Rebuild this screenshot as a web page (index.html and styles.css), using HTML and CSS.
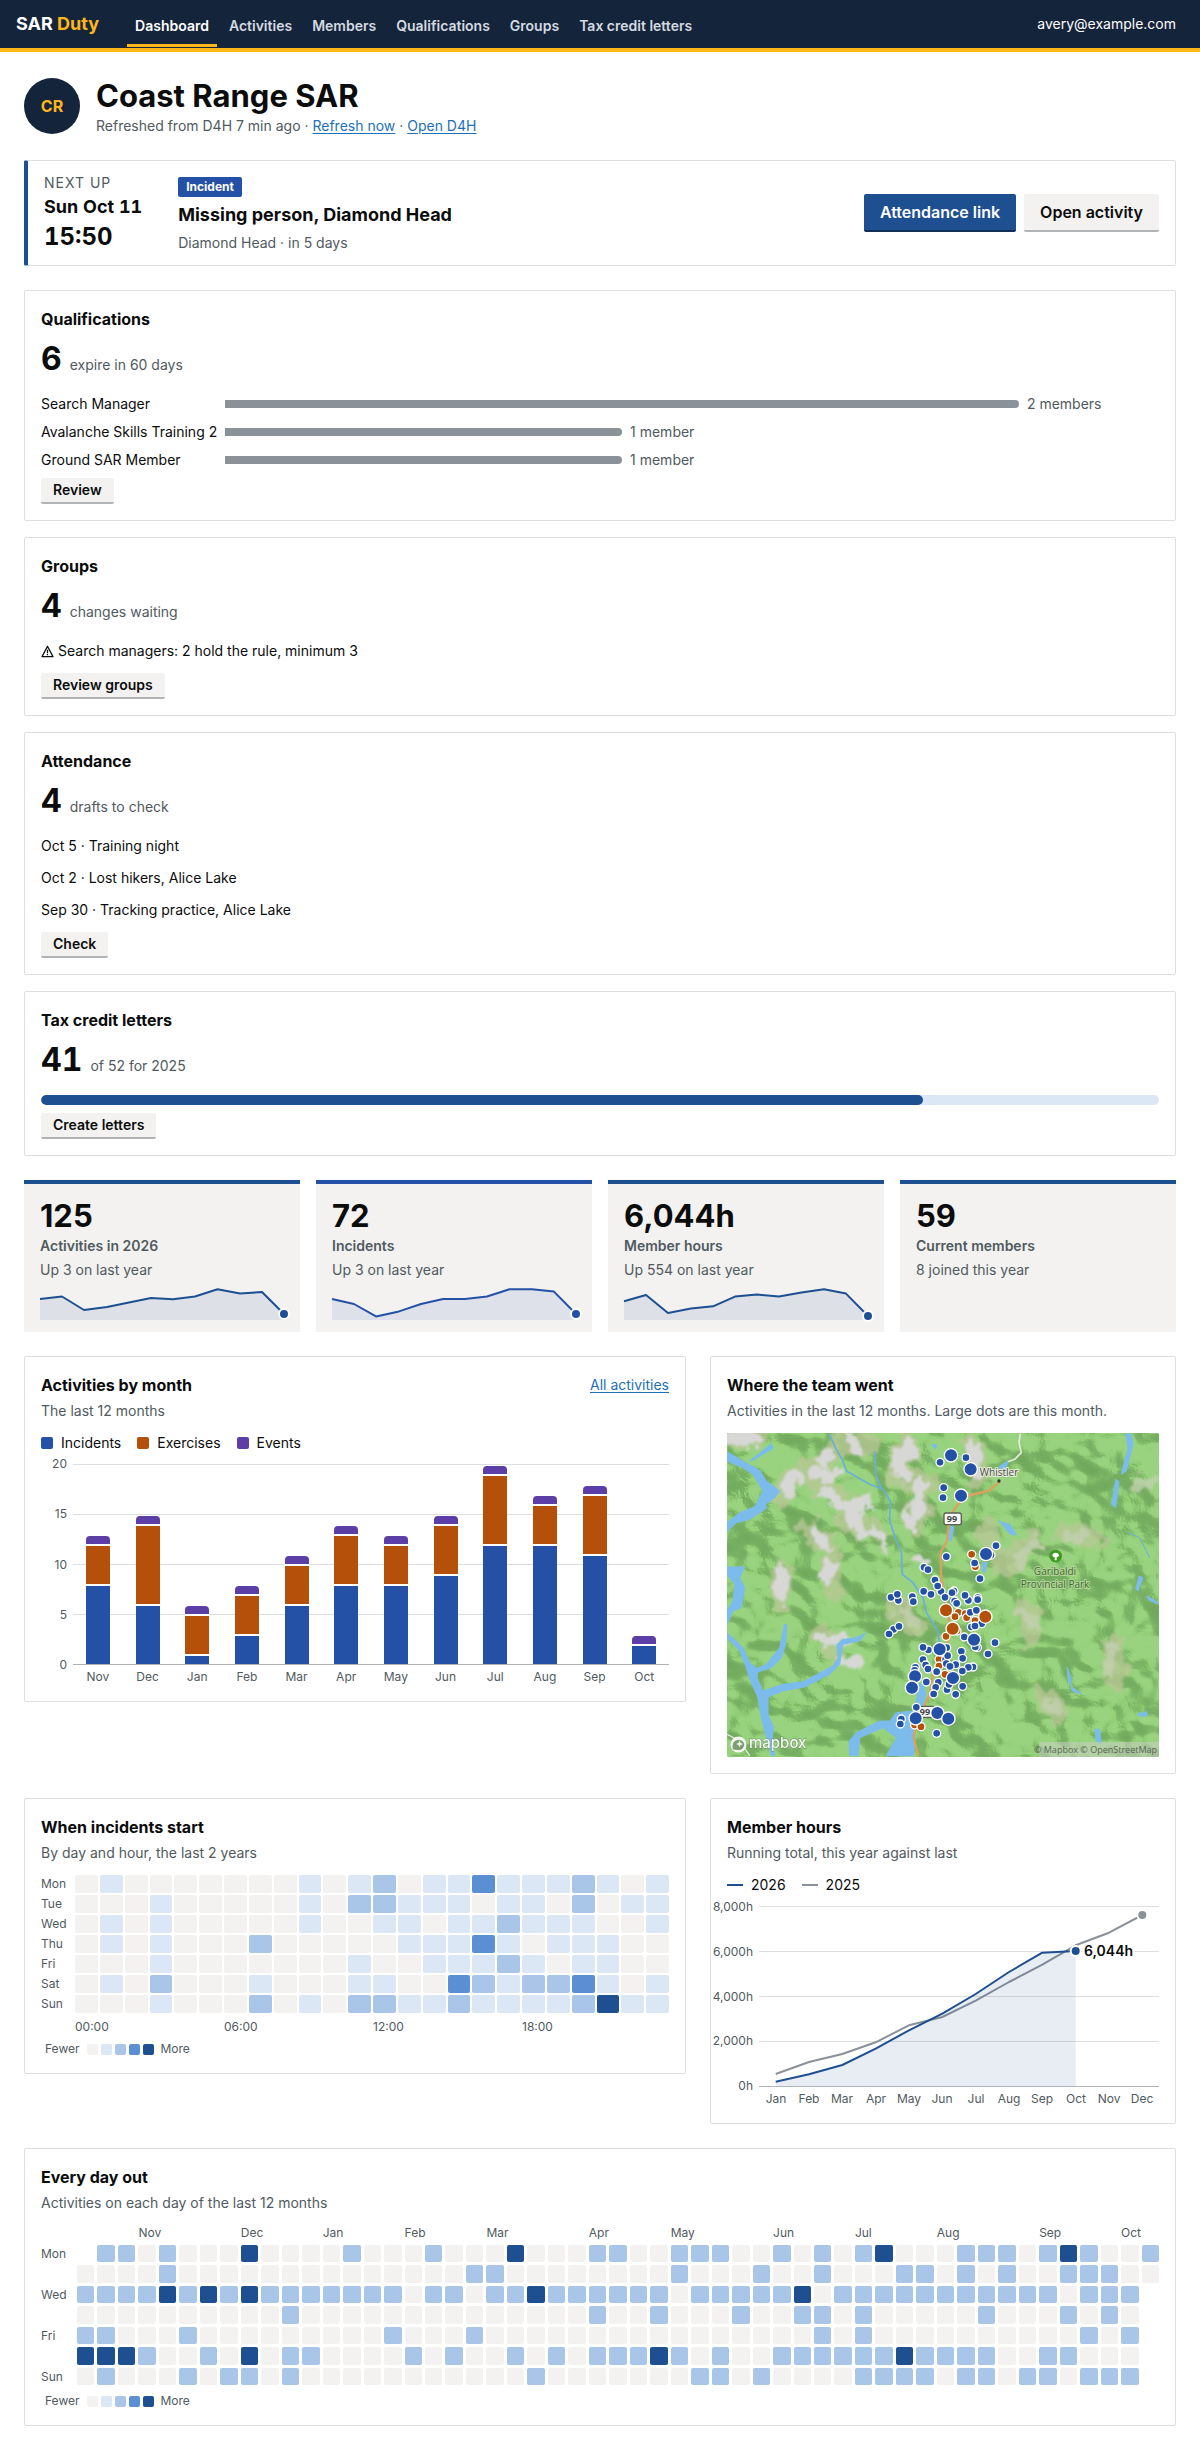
FILE: index.html
```html
<!DOCTYPE html>
<html lang="en">
<head>
<meta charset="utf-8">
<meta name="viewport" content="width=device-width, initial-scale=1">
<title>Dashboard · SAR Duty</title>
<link rel="stylesheet" href="styles.css">
</head>
<body>
<header class="topbar">
  <a class="brand" href="#">SAR <span class="brand-accent">Duty</span></a>
  <nav class="nav" aria-label="Main">
    <a class="nav-link is-current" href="#" aria-current="page">Dashboard</a>
    <a class="nav-link" href="#">Activities</a>
    <a class="nav-link" href="#">Members</a>
    <a class="nav-link" href="#">Qualifications</a>
    <a class="nav-link" href="#">Groups</a>
    <a class="nav-link" href="#">Tax credit letters</a>
  </nav>
  <a class="account" href="#">avery@example.com</a>
</header>

<main class="page">
  <div class="team">
    <div class="avatar" aria-hidden="true">CR</div>
    <div>
      <h1 class="team-name">Coast Range SAR</h1>
      <p class="muted">Refreshed from D4H 7 min ago · <a class="link" href="#">Refresh now</a> · <a class="link" href="#">Open D4H</a></p>
    </div>
  </div>

  <section class="next" aria-label="Next up">
    <div class="next-when">
      <p class="next-kicker">NEXT UP</p>
      <p class="next-date">Sun Oct 11</p>
      <p class="next-time">15:50</p>
    </div>
    <div class="next-what">
      <span class="badge">Incident</span>
      <h2 class="next-title">Missing person, Diamond Head</h2>
      <p class="muted">Diamond Head · in 5 days</p>
    </div>
    <div class="next-actions">
      <button class="button button-primary" type="button">Attendance link</button>
      <button class="button" type="button">Open activity</button>
    </div>
  </section>

  <div class="stack">
    <section class="card">
      <h2 class="card-title">Qualifications</h2>
      <p class="figure"><strong class="figure-number">6</strong><span class="figure-label">expire in 60 days</span></p>
      <div class="quals">
        <span>Search Manager</span>
        <div class="qual-track"><span class="qual-bar" style="width:85%"></span><span class="muted">2 members</span></div>
        <span>Avalanche Skills Training 2</span>
        <div class="qual-track"><span class="qual-bar" style="width:42.5%"></span><span class="muted">1 member</span></div>
        <span>Ground SAR Member</span>
        <div class="qual-track"><span class="qual-bar" style="width:42.5%"></span><span class="muted">1 member</span></div>
      </div>
      <button class="button button-small" type="button">Review</button>
    </section>

    <section class="card">
      <h2 class="card-title">Groups</h2>
      <p class="figure"><strong class="figure-number">4</strong><span class="figure-label">changes waiting</span></p>
      <p class="item item-warning">
        <svg class="warning-icon" viewBox="0 0 13 13" aria-hidden="true"><path d="M6.5 1.4 12 11.6H1Z" fill="none" stroke="currentColor" stroke-width="1.2" stroke-linejoin="round"/><path d="M6.5 4.8v3.4M6.5 9.1v1.2" stroke="currentColor" stroke-width="1.2"/></svg>
        Search managers: 2 hold the rule, minimum 3
      </p>
      <button class="button button-small" type="button">Review groups</button>
    </section>

    <section class="card">
      <h2 class="card-title">Attendance</h2>
      <p class="figure"><strong class="figure-number">4</strong><span class="figure-label">drafts to check</span></p>
      <p class="item">Oct 5 · Training night</p>
      <p class="item">Oct 2 · Lost hikers, Alice Lake</p>
      <p class="item">Sep 30 · Tracking practice, Alice Lake</p>
      <button class="button button-small" type="button">Check</button>
    </section>

    <section class="card">
      <h2 class="card-title">Tax credit letters</h2>
      <p class="figure"><strong class="figure-number">41</strong><span class="figure-label">of 52 for 2025</span></p>
      <div class="progress" role="progressbar" aria-valuemin="0" aria-valuemax="52" aria-valuenow="41" aria-label="Letters created"><div class="progress-fill" style="width:78.85%"></div></div>
      <button class="button button-small" type="button">Create letters</button>
    </section>
  </div>

  <div class="tiles">
    <section class="tile">
      <p class="tile-number">125</p>
      <h2 class="tile-label">Activities in 2026</h2>
      <p class="tile-note">Up 3 on last year</p>
      <svg class="spark" viewBox="0 0 244 32" aria-hidden="true">
        <path class="spark-area" d="M0 11 22 8.5 44 22 67 19 89 14.5 111 10 133 11.3 155 8.5 177.5 1.2 200 5.5 222 4 244 26V32H0Z"/>
        <path class="spark-line" d="M0 11 22 8.5 44 22 67 19 89 14.5 111 10 133 11.3 155 8.5 177.5 1.2 200 5.5 222 4 244 26"/>
        <circle class="spark-dot" cx="244" cy="26" r="5"/>
      </svg>
    </section>
    <section class="tile tile-incidents">
      <p class="tile-number">72</p>
      <h2 class="tile-label">Incidents</h2>
      <p class="tile-note">Up 3 on last year</p>
      <svg class="spark" viewBox="0 0 244 32" aria-hidden="true">
        <path class="spark-area" d="M0 11 22 16 44 28.4 67 23.4 89 16 111 11 133 11 155 8.5 177.5 1.2 200 1.2 222 3.6 244 26V32H0Z"/>
        <path class="spark-line" d="M0 11 22 16 44 28.4 67 23.4 89 16 111 11 133 11 155 8.5 177.5 1.2 200 1.2 222 3.6 244 26"/>
        <circle class="spark-dot" cx="244" cy="26" r="5"/>
      </svg>
    </section>
    <section class="tile">
      <p class="tile-number">6,044h</p>
      <h2 class="tile-label">Member hours</h2>
      <p class="tile-note">Up 554 on last year</p>
      <svg class="spark" viewBox="0 0 244 32" aria-hidden="true">
        <path class="spark-area" d="M0 13.3 22 7 44 25 67 20.5 89 18.3 111 8.6 133 6.6 155 8.4 177.5 4.4 200 1.2 222 5.6 244 28V32H0Z"/>
        <path class="spark-line" d="M0 13.3 22 7 44 25 67 20.5 89 18.3 111 8.6 133 6.6 155 8.4 177.5 4.4 200 1.2 222 5.6 244 28"/>
        <circle class="spark-dot" cx="244" cy="28" r="5"/>
      </svg>
    </section>
    <section class="tile">
      <p class="tile-number">59</p>
      <h2 class="tile-label">Current members</h2>
      <p class="tile-note">8 joined this year</p>
    </section>
  </div>

  <div class="panels">
    <section class="card panel-wide">
      <div class="card-head"><h2 class="card-title">Activities by month</h2><a class="link" href="#">All activities</a></div>
      <p class="card-note">The last 12 months</p>
      <ul class="legend">
        <li class="legend-item"><span class="key key-incidents"></span>Incidents</li>
        <li class="legend-item"><span class="key key-exercises"></span>Exercises</li>
        <li class="legend-item"><span class="key key-events"></span>Events</li>
      </ul>
      <div class="columns">
        <div class="scale"><span>20</span><span>15</span><span>10</span><span>5</span><span>0</span></div>
        <div class="plot" id="plot"></div>
        <div class="months" id="months"></div>
      </div>
    </section>

    <section class="card panel-narrow">
      <h2 class="card-title">Where the team went</h2>
      <p class="card-note">Activities in the last 12 months. Large dots are this month.</p>
      <svg class="map" viewBox="0 0 432 324" role="img" aria-label="Map of activities">
        <defs>
          <filter id="relief" x="0" y="0" width="100%" height="100%" color-interpolation-filters="sRGB">
            <feTurbulence type="fractalNoise" baseFrequency="0.018 0.021" numOctaves="3" seed="11"/>
            <feColorMatrix values="0 0 0 0 0  0 0 0 0 0  0 0 0 0 0  1 0 0 0 0"/>
            <feDiffuseLighting surfaceScale="22" diffuseConstant="1.15" lighting-color="#fff"><feDistantLight azimuth="315" elevation="52"/></feDiffuseLighting>
            <feComponentTransfer>
              <feFuncR type="table" tableValues=".44 .45 .46 .47 .5 .58 .6"/>
              <feFuncG type="table" tableValues=".66 .67 .68 .69 .73 .81 .83"/>
              <feFuncB type="table" tableValues=".36 .37 .38 .39 .41 .47 .5"/>
            </feComponentTransfer>
          </filter>
          <filter id="ragged" x="-10%" y="-10%" width="120%" height="120%">
            <feTurbulence type="fractalNoise" baseFrequency="0.07" numOctaves="3" seed="4"/>
            <feDisplacementMap in="SourceGraphic" scale="24" xChannelSelector="R" yChannelSelector="G"/>
            <feGaussianBlur stdDeviation="0.8"/>
          </filter>
        </defs>
        <rect width="432" height="324" fill="#86c06d"/>
        <rect width="432" height="324" filter="url(#relief)"/>
        <g filter="url(#ragged)">
          <g transform="scale(.33333) translate(-82 -266)">
            <g fill="none" stroke="#b9c795" stroke-linecap="round" stroke-linejoin="round" stroke-width="66" opacity=".75">
              <path d="M100 280 170 275M250 450 270 400 380 350 440 290 500 300M320 390 420 450 440 520 540 580M620 300 600 400 680 420 640 540M330 560 380 600M390 650 400 740M250 680 240 760M360 870 420 940M820 300 840 400M1000 590 920 670M1100 560 1180 580M980 800 990 880M1240 900 1250 1000M590 780 640 850M1040 1060 1060 1100M860 560 900 620"/>
            </g>
            <g fill="none" stroke="#d7d8d6" stroke-linecap="round" stroke-linejoin="round" stroke-width="40">
              <path d="M100 280 160 285M260 450 285 395M370 350 390 330M450 280 480 320M340 390 400 400M390 450 420 490 500 470M460 510 490 560 550 590M630 300 600 360 620 400M660 430 650 490 630 550M350 560 375 600M390 660 380 700M250 680 240 760M370 890 430 880M820 300 830 390M660 640 670 650M420 950 470 960"/>
            </g>
            <g fill="none" stroke="#c3d2b2" stroke-linecap="round" stroke-width="38" opacity=".75">
              <path d="M1010 600 960 650M970 810 1000 840M1110 580 1150 570M1230 980 1240 900M1050 1070 1060 1090M610 800 640 830M1320 420 1350 410"/>
            </g>
          </g>
        </g>
        <g transform="scale(.33333) translate(-82 -266)">
          <g fill="#7bbcec" stroke="#7bbcec" stroke-linejoin="round" stroke-width="3">
            <path d="M82 322 130 350 180 378 200 410 240 440 225 460 198 480 200 492 150 525 110 535 82 562V535L120 505 165 488 190 440 160 390 130 370 82 350Z"/>
            <path d="M82 668 135 668 120 700 135 730 125 790 100 800 82 840V800L100 770 105 720 82 690Z"/>
            <path d="M82 866 110 890 130 910 150 955 175 975 172 1000 190 1040 250 1020 310 1012 400 965 415 940 412 900 430 885 470 880 498 866 480 890 430 900 420 960 390 990 315 1028 250 1040 205 1058 205 1110 222 1150 218 1175 225 1234 215 1234 200 1180 185 1120 175 1060 150 1005 140 970 120 920 82 880Z"/>
            <path d="M165 975 200 960 240 910 255 840 262 842 258 900 245 940 215 970 170 985Z"/>
            <path d="M450 1234 448 1190 470 1165 540 1130 570 1130 590 1105 640 1100 652 1060 655 1020 672 1020 678 1050 668 1090 650 1110 642 1234 560 1234 590 1180 550 1150 480 1180 475 1234Z"/>
            <path d="M1278 268 1295 270 1300 300 1280 380 1265 390 1285 310ZM1248 405 1258 412 1248 490 1236 480ZM898 530 930 540 952 572 932 570ZM1318 695 1330 700 1315 740 1308 735ZM1343 755 1376 775 1370 778 1345 765ZM1102 968 1115 1005 1112 1025 1145 1048 1120 1042 1106 1010ZM1185 1155 1200 1155 1205 1200 1190 1190ZM1315 1108 1342 1102 1340 1116 1316 1114Z"/>
            <path d="M752 545 763 548 755 590 745 585ZM848 655 862 655 856 685 848 680ZM900 365 925 350 920 370 898 376ZM695 300 711 302 708 315ZM150 350 215 298 220 312 190 330 160 348Z"/>
          </g>
          <g fill="none" stroke="#6aaee0" stroke-width="5">
            <path d="M388 268 410 315 430 350 440 380 510 420 550 435 572 470 570 530 590 590 605 620 608 690 640 715 670 760 680 805 715 860 720 900"/>
            <path d="M525 320 528 390 545 432"/><path d="M1285 565 1320 580 1350 640" stroke-width="3"/>
          </g>
          <g fill="none" stroke="#d9a25f" stroke-width="7" stroke-linejoin="round">
            <path d="M898 415 865 440 800 455 775 480 750 515 742 590 722 625 724 690 732 740 745 800 750 880 720 940 700 990 690 1050 672 1090 650 1130 642 1180 655 1234"/>
            <path d="M962 268 958 295 965 325 945 345 925 352" stroke="#e4ecdf" stroke-width="5"/>
          </g>
          <path d="M82 1170 120 1190 150 1234" fill="none" stroke="#e4ecdf" stroke-width="4"/>
          <g fill="#f8f8f4" stroke="#5c6058" stroke-width="4"><rect x="733" y="506" width="52" height="35" rx="6"/><rect x="655" y="1086" width="50" height="33" rx="6"/></g>
          <circle cx="898" cy="410" r="5" fill="#333"/>
          <circle cx="1068" cy="635" r="19" fill="#3f9a20"/>
          <path d="M1068 625c6 0 10 4 10 8s-4 6-7 6v9h-6v-9c-3 0-7-2-7-6s4-8 10-8z" fill="#fff"/>
        </g>
        <g class="map-text" text-anchor="middle">
          <text class="map-road" x="225" y="89">99</text>
          <text class="map-road" x="198" y="282">99</text>
          <text class="map-town" x="272" y="43">Whistler</text>
          <text class="map-park" x="328" y="142">Garibaldi</text>
          <text class="map-park" x="328" y="155">Provincial Park</text>
        </g>
        <g id="dots" class="dots" transform="scale(.33333) translate(-82 -266)"></g>
        <g class="map-logo">
          <circle cx="11.5" cy="311.5" r="8" fill="#fff"/>
          <path d="M6 316.500c-2-7 3-10.500 7-9.500 4 1 5.500 5 3 8-2.500 3-7 2-10 1.500z" fill="#7b9a75"/>
          <path d="M12.500 307.500l1 2.500 2.500 1-2.500 1-1 2.500-1-2.500-2.500-1 2.500-1z" fill="#fff"/>
          <text class="map-brand" x="22" y="315">mapbox</text>
        </g>
        <rect x="312" y="309" width="120" height="15" fill="#c9cfc4" opacity=".55"/>
        <text class="map-credit" x="430" y="320" text-anchor="end">© Mapbox © OpenStreetMap</text>
      </svg>
    </section>

    <section class="card panel-wide">
      <h2 class="card-title">When incidents start</h2>
      <p class="card-note">By day and hour, the last 2 years</p>
      <div class="heat" id="heat"></div>
      <div class="ramp">Fewer <span class="ramp-steps"><i class="cell level-0"></i><i class="cell level-1"></i><i class="cell level-2"></i><i class="cell level-3"></i><i class="cell level-4"></i></span> More</div>
    </section>

    <section class="card panel-narrow">
      <h2 class="card-title">Member hours</h2>
      <p class="card-note">Running total, this year against last</p>
      <ul class="legend">
        <li class="legend-item"><span class="dash dash-now"></span>2026</li>
        <li class="legend-item"><span class="dash dash-before"></span>2025</li>
      </ul>
      <svg class="lines" viewBox="0 0 432 208" role="img" aria-label="Member hours, running total">
        <path class="rule" d="M32 7.5H432M32 52.5H432M32 97.5H432M32 142.5H432"/>
        <path class="axis" d="M32 187.5H432"/>
        <g class="tick" text-anchor="end"><text x="26" y="12">8,000h</text><text x="26" y="57">6,000h</text><text x="26" y="102">4,000h</text><text x="26" y="146">2,000h</text><text x="26" y="191">0h</text></g>
        <path class="line-before" d="M48.7 175 82 163 115.3 155 148.7 143.3 182 126.3 215.3 118 248.7 101.7 282 83 315.3 65.7 348.7 46.3 382 33.7 415.3 16"/>
        <path class="area-now" d="M48.7 182.7 82 175.3 115.3 166 148.7 149.7 182 131.3 215.3 114.7 248.7 95 282 73 315.3 53.7 348.7 52V187H48.7Z"/>
        <path class="line-now" d="M48.7 182.7 82 175.3 115.3 166 148.7 149.7 182 131.3 215.3 114.7 248.7 95 282 73 315.3 53.7 348.7 52"/>
        <circle class="dot-before" cx="415.3" cy="16" r="5"/>
        <circle class="dot-now" cx="348.7" cy="52" r="5"/>
        <text class="callout" x="357" y="57">6,044h</text>
        <g class="tick" text-anchor="middle"><text x="49" y="204">Jan</text><text x="82" y="204">Feb</text><text x="115" y="204">Mar</text><text x="149" y="204">Apr</text><text x="182" y="204">May</text><text x="215" y="204">Jun</text><text x="249" y="204">Jul</text><text x="282" y="204">Aug</text><text x="315" y="204">Sep</text><text x="349" y="204">Oct</text><text x="382" y="204">Nov</text><text x="415" y="204">Dec</text></g>
      </svg>
    </section>

    <section class="card panel-full">
      <h2 class="card-title">Every day out</h2>
      <p class="card-note">Activities on each day of the last 12 months</p>
      <div class="calendar" id="calendar"></div>
      <div class="ramp">Fewer <span class="ramp-steps"><i class="cell level-0"></i><i class="cell level-1"></i><i class="cell level-2"></i><i class="cell level-3"></i><i class="cell level-4"></i></span> More</div>
    </section>
  </div>
</main>
<script src="charts.js"></script>
</body>
</html>
```

FILE: charts.js
```js
function add(parent, className, text) {
  const el = document.createElement('span');
  el.className = className;
  if (text) el.textContent = text;
  parent.appendChild(el);
  return el;
}

// Activities by month: [month, incidents, exercises, events]
const byMonth = [
  ['Nov', 8, 4, 1], ['Dec', 6, 8, 1], ['Jan', 1, 4, 1], ['Feb', 3, 4, 1],
  ['Mar', 6, 4, 1], ['Apr', 8, 5, 1], ['May', 8, 4, 1], ['Jun', 9, 5, 1],
  ['Jul', 12, 7, 1], ['Aug', 12, 4, 1], ['Sep', 11, 6, 1], ['Oct', 2, 0, 1],
];
const plot = document.getElementById('plot');
const months = document.getElementById('months');
for (const [month, incidents, exercises, events] of byMonth) {
  const bar = add(plot, 'bar');
  for (const [kind, count] of [['events', events], ['exercises', exercises], ['incidents', incidents]]) {
    if (count) add(bar, 'bar-part').style.height = count * 5 + '%';
    if (count) add(bar.lastChild, 'bar-fill key-' + kind);
  }
  add(months, 'month', month);
}

// Incidents by weekday and hour, one level per hour
const byHour = {
  Mon: '010000000101201131112101',
  Tue: '000100000102211101102011',
  Wed: '010100000100110112111001',
  Thu: '010100020000011131011100',
  Fri: '000100000001001112101100',
  Sat: '010200010001100321223101',
  Sun: '000100020102211211112411',
};
const heat = document.getElementById('heat');
for (const [day, levels] of Object.entries(byHour)) {
  add(heat, 'axis-label', day);
  for (const level of levels) add(heat, 'cell level-' + level);
}
add(heat, 'axis-label');
for (const hour of ['00:00', '06:00', '12:00', '18:00']) add(heat, 'hour', hour);

// Days out by week: label, first and last week, weeks with one activity, weeks with more
const byDay = [
  ['Mon', 1, 52, [1, 2, 4, 13, 17, 25, 26, 29, 30, 31, 34, 36, 38, 43, 44, 45, 47, 49, 52], [8, 21, 39, 48]],
  ['', 0, 52, [4, 19, 20, 29, 33, 36, 40, 41, 43, 45, 48, 49, 50], []],
  ['Wed', 0, 51, [0, 1, 2, 3, 5, 7, 9, 10, 11, 12, 13, 14, 15, 17, 18, 20, 21, 23, 24, 25, 26, 27, 28, 30, 31, 32, 33, 34, 37, 38, 39, 40, 41, 42, 43, 44, 45, 46, 47, 49, 50, 51], [4, 6, 8, 22, 35]],
  ['', 0, 51, [10, 25, 28, 32, 35, 36, 38, 44, 48, 50], []],
  ['Fri', 0, 51, [0, 1, 5, 15, 19, 36, 38, 49, 51], []],
  ['', 0, 51, [3, 6, 10, 11, 16, 18, 21, 23, 25, 26, 27, 29, 31, 34, 35, 36, 37, 38, 39, 41, 42, 43, 44, 47, 48], [0, 1, 2, 8, 28, 40]],
  ['Sun', 0, 51, [1, 5, 7, 8, 10, 22, 30, 31, 33, 38, 39, 40, 41, 43, 44, 46, 47, 49, 50, 51], []],
];
const monthStarts = { Nov: 3, Dec: 8, Jan: 12, Feb: 16, Mar: 20, Apr: 25, May: 29, Jun: 34, Jul: 38, Aug: 42, Sep: 47, Oct: 51 };
const calendar = document.getElementById('calendar');
function place(el, row, column) {
  el.style.gridArea = row + ' / ' + column;
}
for (const [month, week] of Object.entries(monthStarts)) {
  place(add(calendar, 'calendar-month', month), 1, week + 2);
}
byDay.forEach(([day, first, last, one, more], index) => {
  if (day) place(add(calendar, 'axis-label calendar-day', day), index + 2, 1);
  for (let week = first; week <= last; week++) {
    const level = more.includes(week) ? 4 : one.includes(week) ? 2 : 0;
    place(add(calendar, 'cell level-' + level), index + 2, week + 2);
  }
});

// Map dots: x, y
const places = {
  exercise: [[816, 630], [827, 667], [776, 804], [766, 817], [797, 808], [801, 820], [826, 829], [739, 876], [772, 860], [718, 945], [718, 965], [712, 982], [736, 990], [645, 1142], [664, 1147]],
  incident: [[721, 354], [799, 340], [732, 430], [730, 460], [889, 604], [874, 632], [825, 656], [841, 703], [740, 637], [673, 669], [685, 676], [706, 707], [724, 741], [714, 725], [672, 741], [694, 750], [736, 759], [763, 740], [757, 745], [765, 770], [771, 777], [806, 768], [796, 753], [834, 760], [834, 766], [574, 759], [596, 768], [593, 750], [638, 757], [641, 772], [582, 855], [598, 846], [568, 869], [812, 804], [830, 798], [846, 838], [815, 848], [826, 845], [794, 878], [833, 910], [827, 908], [886, 895], [865, 929], [686, 917], [670, 909], [741, 910], [738, 945], [744, 934], [785, 921], [789, 942], [670, 946], [768, 961], [740, 958], [751, 966], [820, 968], [806, 969], [788, 980], [647, 969], [645, 978], [678, 962], [685, 974], [711, 982], [680, 1013], [716, 1014], [708, 1029], [742, 1036], [748, 1020], [789, 1026], [768, 1050], [702, 1049], [650, 1089], [605, 1124], [602, 1139], [711, 1167]],
};
const recent = {
  exercise: [[739, 798], [857, 817], [759, 853]],
  incident: [[754, 333], [813, 375], [784, 454], [859, 629], [823, 886], [720, 915], [646, 996], [637, 1030], [760, 1001], [713, 1106], [648, 1122], [746, 1123]],
};
const dots = document.getElementById('dots');
for (const [group, radius] of [[places, 12], [recent, 20]]) {
  for (const [kind, points] of Object.entries(group)) {
    for (const [x, y] of points) {
      const dot = document.createElementNS('http://www.w3.org/2000/svg', 'circle');
      dot.setAttribute('class', 'dot-' + kind);
      dot.setAttribute('cx', x);
      dot.setAttribute('cy', y);
      dot.setAttribute('r', radius);
      dots.appendChild(dot);
    }
  }
}
```

FILE: styles.css
```css
:root {
  --ink: #0b0c0c;
  --muted: #505a5f;
  --line: #dcdfe0;
  --navy: #14243a;
  --gold: #ffb61a;
  --blue: #1d4f91;
  --incident: #2451a6;
  --exercise: #b5500b;
  --event: #5b3fa6;
  --gray: #8b9199;
  --soft: #f3f2f1;
  --link: #1d70b8;
}

* { box-sizing: border-box; }

body {
  margin: 0;
  background: #fff;
  color: var(--ink);
  font: 14px/20px Inter, "Liberation Sans", sans-serif;
}

h1, h2, p, ul { margin: 0; padding: 0; }
ul { list-style: none; }
svg { display: block; }

.link { color: var(--link); text-decoration: underline; text-underline-offset: 2px; }
.muted { color: var(--muted); }

/* Top bar */
.topbar {
  display: flex;
  align-items: center;
  gap: 28px;
  padding: 0 24px 1px 16px;
  background: var(--navy);
  border-bottom: 4px solid var(--gold);
}
.brand { color: #fff; font-size: 18px; font-weight: 700; line-height: 24px; text-decoration: none; }
.brand-accent { color: var(--gold); }
.nav { display: flex; gap: 4px; flex: 1; }
.nav-link {
  padding: 16px 8px 8px;
  border-bottom: 3px solid transparent;
  color: #d5dae1;
  font-weight: 600;
  text-decoration: none;
}
.nav-link.is-current { border-color: var(--gold); color: #fff; }
.account { color: #fff; text-decoration: none; }

/* Page */
.page { display: flex; flex-direction: column; gap: 24px; padding: 24px 24px 32px; }
.team { display: flex; align-items: center; gap: 16px; }
.avatar {
  display: grid;
  place-items: center;
  width: 56px;
  height: 56px;
  border-radius: 50%;
  background: var(--navy);
  color: var(--gold);
  font-size: 16px;
  font-weight: 700;
}
.team-name { font-size: 31px; line-height: 40px; font-weight: 700; }

/* Next activity */
.next {
  display: flex;
  align-items: center;
  gap: 36px;
  padding: 12px 16px;
  border: 1px solid var(--line);
  border-left: 4px solid var(--blue);
  border-radius: 2px;
}
.next-kicker { color: var(--muted); letter-spacing: 1px; }
.next-date { font-size: 18px; line-height: 28px; font-weight: 700; font-variant-numeric: tabular-nums; }
.next-time { font-size: 24px; line-height: 32px; font-weight: 700; font-variant-numeric: tabular-nums; }
.next-what { display: flex; flex-direction: column; align-items: flex-start; align-self: flex-end; gap: 4px; flex: 1; }
.next-title { font-size: 18px; line-height: 28px; font-weight: 700; }
.badge { padding: 0 8px; border-radius: 2px; background: var(--incident); color: #fff; font-size: 12px; font-weight: 700; }
.next-actions { display: flex; gap: 8px; }

.button {
  padding: 6px 16px;
  border: 0;
  border-bottom: 2px solid #b1b4b6;
  border-radius: 2px;
  background: var(--soft);
  color: var(--ink);
  font: 600 16px/24px Inter, "Liberation Sans", sans-serif;
  cursor: pointer;
}
.button-primary { border-color: #122f57; background: var(--blue); color: #fff; }
.button-small { display: block; padding: 2px 12px; font-size: 14px; line-height: 20px; }

/* Cards */
.stack { display: flex; flex-direction: column; gap: 16px; }
.card { padding: 16px; border: 1px solid var(--line); border-radius: 2px; }
.card-title { font-size: 16px; line-height: 24px; font-weight: 700; }
.card-head { display: flex; align-items: center; justify-content: space-between; }
.card-note { margin: 4px 0 12px; color: var(--muted); }

.figure { display: flex; align-items: baseline; gap: 8px; margin: 5px 0 12px; }
.figure-number { font-size: 32px; line-height: 46px; font-weight: 700; font-variant-numeric: tabular-nums; }
.figure-label { color: var(--muted); }

.quals { display: grid; grid-template-columns: max-content 1fr; gap: 8px; margin-bottom: 8px; }
.qual-track { display: flex; align-items: center; gap: 8px; }
.qual-bar { height: 8px; border-radius: 0 4px 4px 0; background: var(--gray); }

.item { margin-bottom: 12px; }
.item-warning { display: flex; align-items: center; gap: 4px; }
.warning-icon { width: 13px; height: 13px; }

.progress { height: 10px; margin-bottom: 8px; border-radius: 5px; background: #dbe7f5; overflow: hidden; }
.progress-fill { height: 100%; border-radius: 5px; background: var(--blue); }

/* Year tiles */
.tiles { display: grid; grid-template-columns: repeat(4, 1fr); gap: 16px; }
.tile { padding: 12px 16px; border-top: 4px solid var(--blue); background: var(--soft); color: var(--blue); }
.tile-incidents { border-color: var(--incident); color: var(--incident); }
.tile-number { color: var(--ink); font-size: 31px; line-height: 40px; font-weight: 700; }
.tile-label { color: var(--muted); font-size: 14px; line-height: 20px; font-weight: 600; }
.tile-note { margin: 4px 0 8px; color: var(--muted); }
.spark { width: 100%; overflow: visible; }
.spark-area { fill: currentColor; opacity: .1; }
.spark-line { fill: none; stroke: currentColor; stroke-width: 2; stroke-linejoin: round; }
.spark-dot { fill: currentColor; stroke: #fff; stroke-width: 2; }

/* Panels */
.panels { display: grid; grid-template-columns: repeat(12, 1fr); align-items: start; gap: 24px; }
.panel-wide { grid-column: span 7; }
.panel-narrow { grid-column: span 5; }
.panel-full { grid-column: span 12; }

.legend { display: flex; gap: 16px; }
.legend-item { display: flex; align-items: center; gap: 8px; }
.key { width: 12px; height: 12px; border-radius: 2px; }
.key-incidents { background: var(--incident); }
.key-exercises { background: var(--exercise); }
.key-events { background: var(--event); }
.dash { width: 16px; height: 2px; }
.dash-now { background: var(--blue); }
.dash-before { background: var(--gray); }

/* Column chart: the scale beside the plot, the months under it */
.columns {
  display: grid;
  grid-template-columns: 26px 1fr;
  column-gap: 6px;
  row-gap: 4px;
  margin-top: 11px;
  color: var(--muted);
  font-size: 12px;
  line-height: 16px;
}
.scale { display: flex; flex-direction: column; justify-content: space-between; margin: -8px 0; text-align: right; }
.plot {
  display: flex;
  height: 201px;
  border-bottom: 1px solid #b1b4b6;
  background: repeating-linear-gradient(to bottom, var(--line) 0 1px, transparent 1px 50px);
}
.bar { display: flex; flex: 1; flex-direction: column; justify-content: flex-end; align-items: center; }
.bar-part { display: flex; width: 24px; padding-top: 2px; background: #fff; }
.bar-fill { flex: 1; }
.bar-part:first-child { background: none; }
.bar-part:first-child .bar-fill { border-radius: 4px 4px 0 0; }
.months { display: flex; grid-column: 2; }
.month { flex: 1; text-align: center; }

/* Heat maps */
.cell { border-radius: 2px; }
.level-0 { background: #f3f2f1; }
.level-1 { background: #dbe7f5; }
.level-2 { background: #a9c5e8; }
.level-3 { background: #5b8fd3; }
.level-4 { background: #1d4f91; }
.axis-label { color: var(--muted); font-size: 12px; line-height: 18px; }
.heat { display: grid; grid-template-columns: 32px repeat(24, 1fr); gap: 2px; }
.hour { grid-column: span 6; margin-top: 4px; color: var(--muted); font-size: 12px; line-height: 16px; }
.calendar { display: grid; grid-template-columns: 33px repeat(53, minmax(0, 1fr)); gap: 3px; }
.calendar .cell { aspect-ratio: 1; }
.calendar-month { margin-bottom: 1px; color: var(--muted); font-size: 12px; line-height: 16px; white-space: nowrap; }
.calendar-day { height: 0; }
.ramp { display: flex; align-items: center; gap: 7px; margin-top: 8px; padding-left: 4px; color: var(--muted); font-size: 12px; line-height: 16px; }
.heat + .ramp { margin-top: 6px; }
.ramp-steps { display: flex; gap: 3px; }
.ramp .cell { width: 11px; height: 11px; }

/* Line chart */
.lines { width: 100%; margin-top: 4px; overflow: visible; }
.rule { fill: none; stroke: var(--line); }
.axis { fill: none; stroke: #b1b4b6; }
.tick { fill: var(--muted); font-size: 12px; }
.line-before, .line-now { fill: none; stroke-width: 2; stroke-linejoin: round; }
.line-before { stroke: var(--gray); }
.line-now { stroke: var(--blue); }
.area-now { fill: var(--blue); opacity: .1; }
.dot-before, .dot-now { stroke: #fff; stroke-width: 2; }
.dot-before { fill: var(--gray); }
.dot-now { fill: var(--blue); }
.callout { fill: var(--ink); font-size: 14px; font-weight: 600; stroke: #fff; stroke-width: 4; paint-order: stroke; }

/* Map */
.map { width: 100%; border-radius: 2px; }
.map-text { font-family: "Open Sans", "Noto Sans", sans-serif; paint-order: stroke; stroke-width: 2; stroke-linejoin: round; }
.map-road { fill: #444; font-size: 9px; font-weight: 700; }
.map-town { fill: #4a4a4a; font-size: 10px; stroke: #e8eedd; }
.map-park { fill: #3c6b2a; font-size: 10px; stroke: #b4d49c; }
.map-logo { opacity: .9; }
.map-brand { fill: #fff; font: 500 15px Inter, sans-serif; stroke: #6d8a66; stroke-width: 1; paint-order: stroke; }
.map-credit { fill: #5d6658; font: 9px "Open Sans", sans-serif; }
.dots { stroke: #fff; stroke-width: 4; }
.dot-incident { fill: var(--incident); }
.dot-exercise { fill: var(--exercise); }
```
